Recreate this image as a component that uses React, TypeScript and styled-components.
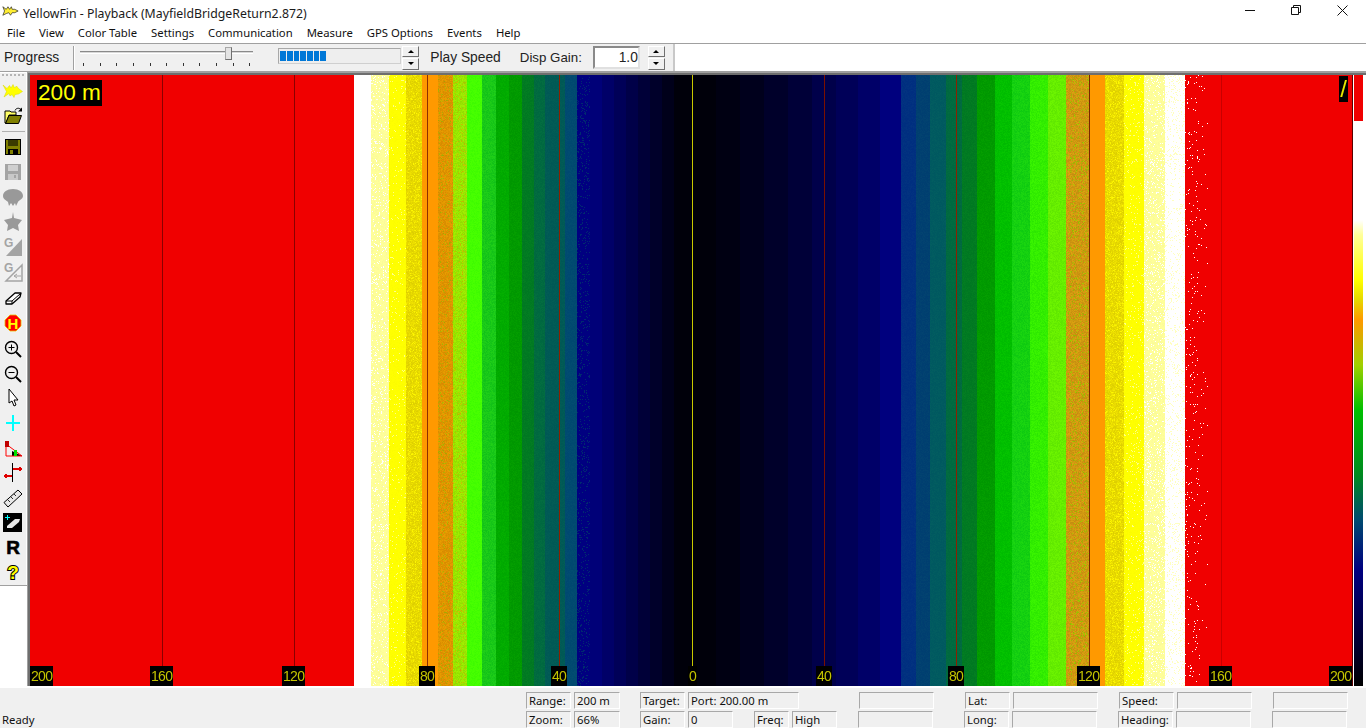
import React, { useEffect, useRef } from 'react';
import styled, { createGlobalStyle } from 'styled-components';

const GlobalStyle = createGlobalStyle`
  html, body {
    margin: 0;
    padding: 0;
    background: #fff;
    overflow: hidden;
  }
  * {
    box-sizing: border-box;
  }
`;

const Window = styled.div`
  width: 1366px;
  height: 728px;
  display: flex;
  flex-direction: column;
  font-family: "Noto Sans", "Liberation Sans", sans-serif;
  font-size: 11.3px;
  color: #000;
  background: #fff;
`;

const TitleBar = styled.div`
  height: 22px;
  display: flex;
  align-items: center;
  padding-left: 2px;
  padding-right: 1px;
`;

const TitleText = styled.span`
  margin-left: 4px;
  flex: 1;
  font-size: 12.3px;
  color: #1a1a1a;
  position: relative;
  top: 2px;
`;

const WinButton = styled.div`
  width: 46px;
  height: 22px;
  display: flex;
  align-items: center;
  justify-content: center;
  svg {
    display: block;
    margin-top: -2px;
  }
`;

const MenuBar = styled.div`
  height: 21px;
  display: flex;
  align-items: center;
  gap: 14px;
  padding-left: 7px;
`;

const MenuItem = styled.span`
  color: #111;
`;

const ToolBar = styled.div`
  height: 29px;
  display: flex;
  border-top: 1px solid #a0a0a0;
  box-shadow: inset 0 1px 0 #fff;
  border-bottom: 1px solid #a0a0a0;
  background: #fff;
`;

const ToolSection = styled.div`
  width: 675px;
  display: flex;
  align-items: center;
  background: #f0f0f0;
  border-right: 2px solid #c8c8c8;
  font-family: "Liberation Sans", Arial, sans-serif;
  font-size: 13.8px;
  color: #222;
`;

const ToolLabel = styled.span<{ $left: number; $size?: number }>`
  margin-left: ${({ $left }) => $left}px;
  font-size: ${({ $size }) => $size ?? 13.8}px;
  white-space: nowrap;
`;

const Etched = styled.div`
  width: 2px;
  height: 24px;
  margin-left: 14px;
  border-left: 1px solid #a0a0a0;
  border-right: 1px solid #fff;
`;

const Slider = styled.div`
  position: relative;
  width: 173px;
  height: 26px;
  margin-left: 5px;
`;

const SliderTrack = styled.div`
  position: absolute;
  left: 0;
  right: 0;
  top: 6px;
  height: 3px;
  background: #d8d8d8;
  border-top: 1px solid #8a8a8a;
  border-bottom: 1px solid #fff;
`;

const SliderThumb = styled.div`
  position: absolute;
  left: 145px;
  top: 2px;
  width: 7px;
  height: 13px;
  background: #e4e4e4;
  border: 1px solid #a8a8a8;
  border-right-color: #707070;
  border-bottom-color: #707070;
`;

const SliderTicks = styled.div`
  position: absolute;
  left: 3px;
  right: 3px;
  top: 18px;
  display: flex;
  justify-content: space-between;
  i {
    display: block;
    width: 1px;
    height: 3px;
    background: #333;
  }
`;

const ProgressBox = styled.div`
  width: 123px;
  height: 16px;
  margin-left: 25px;
  margin-top: -3px;
  display: flex;
  gap: 1px;
  padding: 2px 1px;
  background: #eeeeee;
  border: 1px solid #cfcfcf;
  border-top-color: #a8a8a8;
  border-left-color: #a8a8a8;
`;

const ProgressBlock = styled.i`
  display: block;
  width: 5.7px;
  height: 100%;
  background: #0078d7;
`;

const Spin = styled.div<{ $left: number }>`
  width: 17px;
  height: 24px;
  margin-left: ${({ $left }) => $left}px;
  display: flex;
  flex-direction: column;
  gap: 1px;
`;

const SpinButton = styled.div`
  flex: 1;
  display: flex;
  align-items: center;
  justify-content: center;
  background: #f0f0f0;
  border: 1px solid #fff;
  border-right-color: #707070;
  border-bottom-color: #707070;
`;

const Arrow = styled.i<{ $down?: boolean }>`
  display: block;
  width: 0;
  height: 0;
  border-left: 3px solid transparent;
  border-right: 3px solid transparent;
  ${({ $down }) => ($down ? 'border-top: 3px solid #000;' : 'border-bottom: 3px solid #000;')}
`;

const GainInput = styled.div`
  width: 47px;
  height: 23px;
  margin-left: 11px;
  display: flex;
  align-items: center;
  justify-content: flex-end;
  background: #fff;
  border: 2px solid #8a8a8a;
  border-right-color: #e0e0e0;
  border-bottom-color: #e0e0e0;
`;

const Main = styled.div`
  height: 616px;
  display: flex;
  border-bottom: 2px solid #fff;
`;

const SideBar = styled.div`
  width: 27px;
  background: #fff;
`;

const ToolGroup = styled.div`
  height: 514px;
  background: #f0f0f0;
  border-bottom: 1px solid #a0a0a0;
  border-top: 1px solid #fff;
  padding-top: 1px;
  box-shadow: inset -1px 0 0 #fff;
`;

const Grip = styled.div`
  height: 2px;
  margin: 0 3px 2px 2px;
  background: repeating-linear-gradient(to right, #b4b4b4 0, #b4b4b4 2px, transparent 2px, transparent 4px);
`;

const SideButton = styled.div`
  width: 25px;
  height: 25px;
  display: flex;
  align-items: center;
  justify-content: center;
  svg {
    display: block;
  }
`;

const SideSep = styled.div`
  height: 6px;
  margin: 0 2px;
  display: flex;
  align-items: center;
  &::before {
    content: '';
    display: block;
    width: 100%;
    height: 1px;
    background: #b0b0b0;
  }
`;

const Frame = styled.div`
  flex: 1;
  display: flex;
  border-left: 1px solid #a0a0a0;
  border-top: 1px solid #a0a0a0;
`;

const Inner = styled.div`
  flex: 1;
  display: flex;
  align-items: flex-start;
  border-left: 2px solid #6e6e6e;
  border-top: 2px solid #6e6e6e;
`;

const Scope = styled.div`
  position: relative;
  width: 1323px;
  height: 611px;
  flex: none;
`;

const ScopeCanvas = styled.canvas`
  display: block;
`;

const RangeTag = styled.div`
  position: absolute;
  left: 7px;
  top: 5px;
  height: 26px;
  padding: 0 1px;
  line-height: 26px;
  background: #000;
  color: #ffff00;
  font-family: "Liberation Sans", Arial, sans-serif;
  font-size: 22.6px;
`;

const SlashTag = styled.div`
  position: absolute;
  right: 5px;
  top: 1px;
  width: 9px;
  height: 26px;
  line-height: 26px;
  text-align: center;
  background: #000;
  color: #e8e800;
  font-family: "Liberation Sans", Arial, sans-serif;
  font-size: 24px;
`;

const ScaleTag = styled.div`
  position: absolute;
  bottom: 0;
  height: 20px;
  line-height: 20px;
  padding: 0 1px;
  background: #000;
  color: #c4c400;
  font-family: "Liberation Sans", Arial, sans-serif;
  font-size: 14px;
  letter-spacing: -0.7px;
`;

const ColorBar = styled.div`
  width: 9px;
  height: 611px;
  margin-left: 1px;
  flex: none;
  background: linear-gradient(
    to bottom,
    #f00000 0,
    #f00000 46px,
    #ffffff 46px,
    #ffffff 145px,
    #ffff99 160px,
    #ffff00 205px,
    #e6d800 225px,
    #ff9900 245px,
    #a0d000 290px,
    #00c000 335px,
    #008a20 400px,
    #004a70 445px,
    #000080 495px,
    #000030 570px,
    #000000 611px
  );
`;

const StatusBar = styled.div`
  flex: 1;
  display: flex;
  background: #f0f0f0;
  position: relative;
`;

const ReadyText = styled.span`
  width: 526px;
  flex: none;
  padding-left: 2px;
  padding-top: 24px;
  color: #111;
`;

const StatusGrid = styled.div`
  padding-top: 4px;
  display: flex;
  flex-direction: column;
  gap: 2px;
`;

const StatusRow = styled.div`
  display: flex;
  height: 17px;
`;

const Cell = styled.div<{ $w: number; $gap?: number }>`
  width: ${({ $w }) => $w}px;
  margin-left: ${({ $gap }) => $gap ?? 3}px;
  padding-left: 2px;
  line-height: 16px;
  white-space: nowrap;
  overflow: hidden;
  color: #111;
  border-top: 1px solid #a8a8a8;
  border-left: 1px solid #a8a8a8;
  border-right: 1px solid #fff;
  border-bottom: 1px solid #fff;
`;

/* icons, drawn in a 20x20 box; dy nudges the drawing down */
const Icon: React.FC<{ children: React.ReactNode; crisp?: boolean; dy?: number }> = ({ children, crisp, dy = 0 }) => (
  <svg width="20" height="20" viewBox={`0 ${-dy} 20 20`} overflow="visible" shapeRendering={crisp ? 'crispEdges' : undefined}>
    {children}
  </svg>
);

const FishShape = () => (
  <polygon
    points="0,4 4,7.5 6.5,4.5 8,7 10,3.5 11.5,7 13.5,5 15.5,7.5 19.5,10.5 15.5,13 12,13.5 11,16.5 9,13.5 7,15 6,12.5 1,16 3.5,10.5"
    fill="#ffff00"
    stroke="#d8d800"
    strokeWidth="0.5"
  />
);

const TitleFish = () => (
  <svg width="17" height="12" viewBox="0 0 20 14">
    <polygon points="1,2 5,5 7,2 9,5 11,2 12,5 15,5 19,7 15,9 12,9 10,12 8,9 5,10 1,12 3,7" fill="#ffee33" stroke="#222" strokeWidth="0.8" />
  </svg>
);

const Gray = '#a4a4a4';

const toolIcons: (React.ReactNode | null)[] = [
  <Icon><FishShape /></Icon>,
  <Icon>
    <path d="M2 5h5l1 1h5v3H6l-3 8H2z" fill="#ffff66" stroke="#000" strokeWidth="1" />
    <path d="M2.5 17.5 6 9.5h12.5l-3 8z" fill="#808000" stroke="#000" strokeWidth="1" />
    <path d="M12 4.5c1-2.5 4-3 6-1" fill="none" stroke="#000" strokeWidth="1" />
    <path d="M19 1.5v4h-4z" fill="#000" />
  </Icon>,
  null,
  <Icon crisp>
    <rect x="2" y="2" width="16" height="16" fill="#000" />
    <rect x="3" y="3" width="14" height="14" fill="#808000" />
    <rect x="5" y="3" width="10" height="6" fill="#3a3a00" />
    <rect x="5" y="12" width="10" height="6" fill="#000" />
    <rect x="7" y="13" width="3" height="4" fill="#808000" />
  </Icon>,
  <Icon crisp>
    <rect x="2" y="2" width="16" height="16" fill={Gray} />
    <rect x="5" y="3" width="10" height="6" fill="#cfcfcf" />
    <rect x="5" y="12" width="10" height="6" fill="#c8c8c8" />
    <rect x="11" y="13" width="2" height="3" fill={Gray} />
  </Icon>,
  <Icon dy={1}>
    <path d="M0 8c0-4 4-7 10-7s10 3 10 7c0 3-4 4-5 6l-2 4-1-3-2 3-2-3-2 3-1-4C3 12 0 11 0 8z" fill="#999" />
  </Icon>,
  <Icon dy={1}>
    <polygon points="10,-1 11,5 19,7 15,12 16,18 10,15 4,18 5,12 1,7 9,5" fill="#999" />
  </Icon>,
  <Icon>
    <polygon points="19,2 19,19 3,19" fill={Gray} />
    <text x="1" y="10" fontFamily="Liberation Sans" fontWeight="700" fontSize="12" fill={Gray}>G</text>
  </Icon>,
  <Icon>
    <polygon points="19,3 19,19 3,19" fill="none" stroke={Gray} strokeWidth="1.5" />
    <path d="M18 14h-7l3-2m-3 2 3 2" fill="none" stroke={Gray} />
    <text x="1" y="10" fontFamily="Liberation Sans" fontWeight="700" fontSize="12" fill={Gray}>G</text>
  </Icon>,
  <Icon dy={1}>
    <path d="M3 13 12 5h6l-1 4-8 7H3z" fill="#fff" stroke="#000" strokeWidth="1.3" strokeLinejoin="round" />
    <path d="M3 13h6v3M9 13l8-7" fill="none" stroke="#000" strokeWidth="1" />
  </Icon>,
  <Icon dy={1}>
    <polygon points="7,2 13,2 18,7 18,13 13,18 7,18 2,13 2,7" fill="#ff0000" stroke="#e8c000" strokeWidth="0.8" />
    <text x="10" y="15.5" textAnchor="middle" fontFamily="Liberation Sans" fontWeight="700" fontSize="15" fill="#ffff00">H</text>
  </Icon>,
  <Icon dy={2}>
    <circle cx="8.5" cy="8.5" r="6" fill="none" stroke="#000" strokeWidth="1.4" />
    <path d="M5.5 8.5h6M8.5 5.5v6" stroke="#000" strokeWidth="1" />
    <path d="M13 13l5 5" stroke="#000" strokeWidth="2" />
  </Icon>,
  <Icon dy={2}>
    <circle cx="8.5" cy="8.5" r="6" fill="none" stroke="#000" strokeWidth="1.4" />
    <path d="M5.5 8.5h6" stroke="#000" strokeWidth="1" />
    <path d="M13 13l5 5" stroke="#000" strokeWidth="2" />
  </Icon>,
  <Icon dy={1}>
    <path d="M6 1v14l3-2 2 5 2-1-2-5h4z" fill="#fff" stroke="#000" strokeWidth="1" strokeLinejoin="round" />
  </Icon>,
  <Icon crisp dy={1}>
    <path d="M10 2v16M3 10h14" stroke="#00ffff" strokeWidth="2" />
  </Icon>,
  <Icon dy={1}>
    <polygon points="9,13 19,18 9,18" fill="#000" />
    <path d="M3 3v15M3 18h16M3 6l16 12" stroke="#ff0000" fill="none" strokeWidth="1" />
    <rect x="2" y="3" width="4" height="6" fill="#c00000" />
    <rect x="11" y="12" width="3" height="6" fill="#00e000" />
  </Icon>,
  <Icon crisp dy={1}>
    <path d="M9 0v19" stroke="#000" strokeWidth="1" />
    <path d="M10 6h8" stroke="#e00000" strokeWidth="2" />
    <path d="M1 13h8" stroke="#e00000" strokeWidth="2" />
    <path d="M16 3.5v5l4-2.5zM4 10.5v5l-4-2.5z" fill="#e00000" />
  </Icon>,
  <Icon dy={1}>
    <path d="M1 14.5 15 2l4 4L5 19z" fill="#e8e8e8" stroke="#000" strokeWidth="1" />
    <path d="M5 12l2 2M8 9l2 2M11 6l2 2" stroke="#000" strokeWidth="0.8" />
  </Icon>,
  <Icon crisp dy={1}>
    <rect x="0" y="0" width="19" height="19" fill="#000" />
    <path d="M4 13 12 6h5l-1 3-7 6H4z" fill="#e8e8e8" shapeRendering="auto" />
    <path d="M4 2v5M2 4h5" stroke="#00ffff" strokeWidth="1" />
  </Icon>,
  <Icon>
    <text x="10" y="16.5" textAnchor="middle" fontFamily="Liberation Sans" fontWeight="700" fontSize="19" fill="#000" stroke="#000" strokeWidth="0.6">R</text>
  </Icon>,
  <Icon>
    <text x="10" y="17" textAnchor="middle" fontFamily="Liberation Sans" fontWeight="700" fontSize="19" fill="#ffff00" stroke="#000" strokeWidth="2" paintOrder="stroke">?</text>
  </Icon>,
];

/* x0, x1 in page pixels, base colour, noise amount, speck colour, speck chance */
type Band = [number, number, string, number?, string?, number?];

const bands: Band[] = [
  [30, 354, '#f00000'],
  [354, 371, '#ffffff'],
  [371, 389, '#ffff99', 6, '#ffffff', 0.1],
  [389, 406, '#ffff00', 3, '#ffff88', 0.04],
  [406, 422, '#e6d800', 10, '#f8f000', 0.15],
  [422, 438, '#ff9900'],
  [438, 453, '#e09400', 10, '#b0b000', 0.1],
  [453, 467, '#99e600', 10, '#c0c000', 0.1],
  [467, 482, '#44ff00', 6],
  [482, 496, '#18c818', 8],
  [496, 509, '#00ab00', 5],
  [509, 522, '#009a00', 5],
  [522, 534, '#007a22', 4],
  [534, 545, '#006a40', 4],
  [545, 565, '#005a55', 3],
  [565, 577, '#004a70', 3],
  [577, 590, '#000080', 0, '#002a70', 0.12],
  [590, 602, '#000078'],
  [602, 614, '#000068'],
  [614, 626, '#000058'],
  [626, 638, '#000048'],
  [638, 650, '#000038'],
  [650, 662, '#00002a'],
  [662, 674, '#00001a'],
  [674, 692, '#00000a'],
  [692, 716, '#00000a'],
  [716, 740, '#000012'],
  [740, 764, '#00001c'],
  [764, 788, '#00002a'],
  [788, 812, '#000038'],
  [812, 836, '#00004a'],
  [836, 858, '#000058'],
  [858, 880, '#000068'],
  [880, 901, '#00007e'],
  [901, 916, '#003080', 3],
  [916, 930, '#004070', 3],
  [930, 946, '#005a60', 3],
  [946, 962, '#006a40', 3],
  [962, 977, '#007a22', 4],
  [977, 995, '#009a00', 5],
  [995, 1012, '#00bf00', 6],
  [1012, 1030, '#14d010', 7],
  [1030, 1048, '#33ee00', 8],
  [1048, 1066, '#66ee00', 8],
  [1066, 1090, '#d09810', 12, '#a0c000', 0.12],
  [1090, 1105, '#ff9900'],
  [1105, 1124, '#e6d800', 10, '#f8f000', 0.2],
  [1124, 1144, '#ffff00', 3, '#ffff88', 0.06],
  [1144, 1165, '#ffff99', 6, '#ffffff', 0.12],
  [1165, 1185, '#ffffff', 0, '#ffffc0', 0.12],
  [1185, 1208, '#f00000', 0, '#ffffff', 0.03],
  [1208, 1353, '#f00000'],
];

const lines: [number, string][] = [
  [162, '#8a0000'],
  [294, '#8a0000'],
  [427, '#8c3000'],
  [559, '#8c2000'],
  [692, '#c8c800'],
  [824, '#7a1000'],
  [956, '#8c2000'],
  [1089, '#7a2800'],
  [1221, '#c80000'],
  [1352, '#5a0000'],
];

const scaleLabels: [string, number][] = [
  ['200', 0],
  ['160', 120],
  ['120', 252],
  ['80', 389],
  ['40', 521],
  ['0', 658],
  ['40', 786],
  ['80', 918],
  ['120', 1047],
  ['160', 1179],
  ['200', 1299],
];

const SCOPE_X = 30;
const SCOPE_W = 1323;
const SCOPE_H = 611;

const hex = (c: string) => [1, 3, 5].map(i => parseInt(c.slice(i, i + 2), 16));

const drawScope = (ctx: CanvasRenderingContext2D) => {
  const img = ctx.createImageData(SCOPE_W, SCOPE_H);
  let seed = 20872;
  const rnd = () => {
    seed = (seed * 1664525 + 1013904223) >>> 0;
    return seed / 4294967296;
  };
  const columns: (Band | undefined)[] = [];
  bands.forEach(b => {
    for (let x = b[0]; x < b[1]; x++) columns[x - SCOPE_X] = b;
  });
  for (let y = 0; y < SCOPE_H; y++) {
    for (let x = 0; x < SCOPE_W; x++) {
      const band = columns[x];
      if (!band) continue;
      const base = hex(band[2]);
      const amount = band[3] ?? 0;
      const chance = band[5] ?? 0;
      const fade = band[0] === 1185 ? (x + SCOPE_X < 1200 ? 1 : 0.4) : 1;
      const useSpeck = chance > 0 && rnd() < chance * fade;
      const color = useSpeck && band[4] ? hex(band[4]) : base;
      const jitter = amount ? (rnd() - 0.5) * amount * 2 : 0;
      const i = (y * SCOPE_W + x) * 4;
      img.data[i] = color[0] + jitter;
      img.data[i + 1] = color[1] + jitter;
      img.data[i + 2] = color[2];
      img.data[i + 3] = 255;
    }
  }
  ctx.putImageData(img, 0, 0);
  lines.forEach(([x, color]) => {
    ctx.fillStyle = color;
    ctx.fillRect(x - SCOPE_X, 0, 1, SCOPE_H);
  });
};

const SonarView: React.FC = () => {
  const ref = useRef<HTMLCanvasElement>(null);

  useEffect(() => {
    const ctx = ref.current?.getContext('2d');
    if (ctx) drawScope(ctx);
  }, []);

  return (
    <Scope>
      <ScopeCanvas ref={ref} width={SCOPE_W} height={SCOPE_H} />
      <RangeTag>200 m</RangeTag>
      <SlashTag>/</SlashTag>
      {scaleLabels.map(([label, left], i) => (
        <ScaleTag key={i} style={{ left }}>{label}</ScaleTag>
      ))}
    </Scope>
  );
};

const SpinBox: React.FC<{ left: number }> = ({ left }) => (
  <Spin $left={left}>
    <SpinButton><Arrow /></SpinButton>
    <SpinButton><Arrow $down /></SpinButton>
  </Spin>
);

const menus = ['File', 'View', 'Color Table', 'Settings', 'Communication', 'Measure', 'GPS Options', 'Events', 'Help'];

const App: React.FC = () => (
  <Window>
    <GlobalStyle />
    <TitleBar>
      <TitleFish />
      <TitleText>YellowFin - Playback (MayfieldBridgeReturn2.872)</TitleText>
      <WinButton>
        <svg width="10" height="10"><path d="M0 5.5h10" stroke="#111" /></svg>
      </WinButton>
      <WinButton>
        <svg width="10" height="10" fill="none" stroke="#111">
          <path d="M.5 2.5h7v7h-7zM2.5 2.5v-2h7v7h-2" />
        </svg>
      </WinButton>
      <WinButton>
        <svg width="11" height="11" stroke="#111"><path d="M.5.5l10 10M10.5.5l-10 10" /></svg>
      </WinButton>
    </TitleBar>
    <MenuBar>
      {menus.map(m => <MenuItem key={m}>{m}</MenuItem>)}
    </MenuBar>
    <ToolBar>
      <ToolSection>
        <ToolLabel $left={4}>Progress</ToolLabel>
        <Etched />
        <Slider>
          <SliderTrack />
          <SliderThumb />
          <SliderTicks>
            {Array.from({ length: 11 }, (_, i) => <i key={i} />)}
          </SliderTicks>
        </Slider>
        <ProgressBox>
          {Array.from({ length: 7 }, (_, i) => <ProgressBlock key={i} />)}
        </ProgressBox>
        <SpinBox left={1} />
        <ToolLabel $left={11}>Play Speed</ToolLabel>
        <ToolLabel $left={19} $size={13.3}>Disp Gain:</ToolLabel>
        <GainInput>1.0</GainInput>
        <SpinBox left={8} />
      </ToolSection>
    </ToolBar>
    <Main>
      <SideBar>
        <ToolGroup>
          <Grip />
          {toolIcons.map((icon, i) =>
            icon ? <SideButton key={i}>{icon}</SideButton> : <SideSep key={i} />
          )}
        </ToolGroup>
      </SideBar>
      <Frame>
        <Inner>
          <SonarView />
          <ColorBar />
        </Inner>
      </Frame>
    </Main>
    <StatusBar>
      <ReadyText>Ready</ReadyText>
      <StatusGrid>
        <StatusRow>
          <Cell $w={45} $gap={0}>Range:</Cell>
          <Cell $w={46}>200 m</Cell>
          <Cell $w={45} $gap={20}>Target:</Cell>
          <Cell $w={111}>Port: 200.00 m</Cell>
          <Cell $w={75} $gap={60}></Cell>
          <Cell $w={45} $gap={31}>Lat:</Cell>
          <Cell $w={85}></Cell>
          <Cell $w={55} $gap={21}>Speed:</Cell>
          <Cell $w={75}></Cell>
          <Cell $w={75} $gap={21}></Cell>
        </StatusRow>
        <StatusRow>
          <Cell $w={45} $gap={0}>Zoom:</Cell>
          <Cell $w={46}>66%</Cell>
          <Cell $w={45} $gap={20}>Gain:</Cell>
          <Cell $w={45}>0</Cell>
          <Cell $w={35} $gap={21}>Freq:</Cell>
          <Cell $w={45}>High</Cell>
          <Cell $w={75} $gap={21}></Cell>
          <Cell $w={45} $gap={31}>Long:</Cell>
          <Cell $w={85}></Cell>
          <Cell $w={55} $gap={21}>Heading:</Cell>
          <Cell $w={75}></Cell>
          <Cell $w={75} $gap={21}></Cell>
        </StatusRow>
      </StatusGrid>
    </StatusBar>
  </Window>
);

export default App;
